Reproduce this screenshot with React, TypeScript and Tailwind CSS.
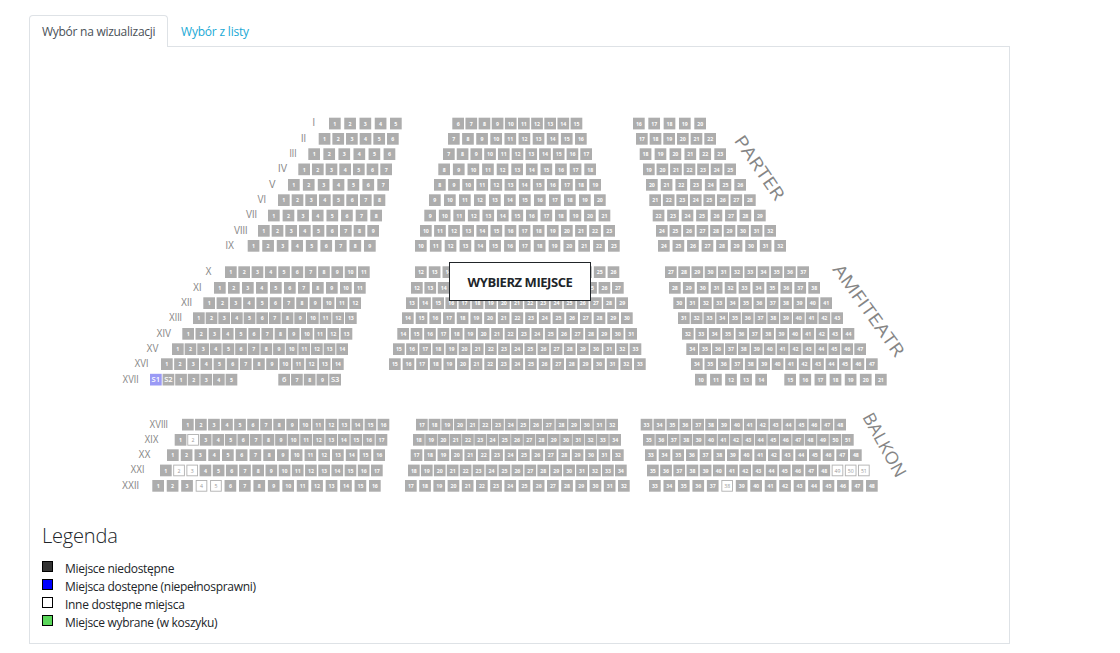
type Block = {
  from: number;
  to: number;
  seats: string[];
  free?: string[];
};

type Row = {
  label: string;
  labelX: number;
  labelWidth: number;
  y: number;
  blocks: Block[];
};

const SEAT = 11.7;

// Left edge of the first seat, right edge of the last one, first and last number.
function block(from: number, to: number, first: number, last: number, free: number[] = []): Block {
  const seats = Array.from({ length: last - first + 1 }, (_, i) => String(first + i));
  return { from, to, seats, free: free.map(String) };
}

function row(label: string, labelX: number, labelWidth: number, y: number, blocks: Block[]): Row {
  return { label, labelX, labelWidth, y, blocks };
}

const rows: Row[] = [
  row("I", 312.5, 2.5, 117.7, [block(329, 401.7, 1, 5), block(452.3, 582.3, 6, 15), block(633, 706, 16, 20)]),
  row("II", 301, 5, 133, [block(318.7, 398.7, 1, 6), block(448, 586.7, 7, 16), block(636, 716, 17, 22)]),
  row("III", 289.5, 7, 148.3, [block(308.3, 395.3, 1, 6), block(443, 592, 7, 17), block(639.7, 726, 18, 23)]),
  row("IV", 278, 9, 163.5, [block(298.3, 392, 1, 7), block(438.3, 596, 8, 18), block(643, 736, 19, 25)]),
  row("V", 269, 6.5, 179, [block(288, 389, 1, 7), block(434, 601, 8, 19), block(646, 746, 20, 26)]),
  row("VI", 257.5, 8.5, 194.3, [block(278, 385.3, 1, 8), block(429, 605.7, 9, 20), block(649.3, 755.7, 21, 28)]),
  row("VII", 246, 11, 209.7, [block(268, 382, 1, 8), block(424.3, 610.3, 9, 21), block(652.7, 765.7, 22, 29)]),
  row("VIII", 234, 13.5, 225, [block(258, 379, 1, 9), block(420, 615, 10, 23), block(656, 776, 24, 32)]),
  row("IX", 225.5, 8.5, 240, [block(247.7, 375.7, 1, 9), block(415, 619.7, 10, 23), block(658, 786, 24, 32)]),

  row("X", 205.5, 6, 266.3, [block(225, 369.7, 1, 11), block(415, 619.3, 12, 26), block(665, 809, 27, 37)]),
  row("XI", 193, 8.5, 282, [block(214, 365.7, 1, 11), block(411, 623.7, 12, 27), block(669, 820, 28, 38)]),
  row("XII", 181, 11, 297.3, [block(203.3, 361, 1, 12), block(406, 628, 13, 29), block(673.3, 832, 30, 41)]),
  row("XIII", 169, 13, 312.3, [block(193, 356.7, 1, 13), block(402, 632.7, 14, 30), block(678, 843, 31, 43)]),
  row("XIV", 156.5, 14.5, 328, [block(182.3, 352.3, 1, 13), block(397.3, 637, 14, 31), block(682, 854.3, 32, 44)]),
  row("XV", 146.5, 12, 343.3, [block(172, 348, 1, 14), block(393, 641.3, 15, 33), block(686.3, 866, 34, 47)]),
  row("XVI", 134.5, 14, 358.3, [block(161, 343.7, 1, 14), block(389, 645.7, 15, 33), block(691, 877.7, 34, 47)]),
  row("XVII", 122.5, 16, 373.8, [
    { from: 150, to: 237.3, seats: ["S1", "S2", "1", "2", "3", "4", "5"] },
    { from: 278.3, to: 341, seats: ["6", "7", "8", "9", "S3"] },
    block(695, 767, 10, 14),
    block(784.3, 886.7, 15, 21),
  ]),

  row("XVIII", 149.5, 18.5, 418.8, [block(182, 389.3, 1, 16), block(416, 618, 17, 32), block(640.7, 846, 33, 48)]),
  row("XIX", 144.5, 14, 434, [block(174.7, 387.3, 1, 17, [2]), block(413, 621, 18, 34), block(643, 853.7, 35, 51)]),
  row("XX", 138.5, 12, 449.3, [block(167, 385, 1, 16), block(410.7, 623.7, 17, 32), block(645, 861.7, 33, 48)]),
  row("XXI", 130.5, 14, 464.6, [
    block(160, 382.7, 1, 17, [2, 3]),
    block(408, 626.7, 18, 34),
    block(647, 869.7, 35, 51, [49, 50, 51]),
  ]),
  row("XXII", 122, 17, 480, [
    block(152.3, 380.7, 1, 16, [4, 5]),
    block(405, 629.7, 17, 32),
    block(649, 877.7, 33, 48, [38]),
  ]),
];

const sections = [
  { name: "PARTER", x: 733.5, y: 140.5, angle: 55.6, length: 74.5 },
  { name: "AMFITEATR", x: 832, y: 269.5, angle: 54.4, length: 109 },
  { name: "BALKON", x: 862, y: 417, angle: 61, length: 70.5 },
];

const legend = [
  { label: "Miejsce niedostępne", color: "bg-[#333333]" },
  { label: "Miejsca dostępne (niepełnosprawni)", color: "bg-[#0000ff]" },
  { label: "Inne dostępne miejsca", color: "bg-white" },
  { label: "Miejsce wybrane (w koszyku)", color: "bg-[#5bd75b]" },
];

function Seat({ x, y, name, free, large }: { x: number; y: number; name: string; free: boolean; large: boolean }) {
  return (
    <g>
      {free ? (
        <rect x={x + 0.5} y={y + 0.5} width={SEAT - 1} height={SEAT - 1} fill="#fff" stroke="#b0b0b0" strokeWidth={0.9} />
      ) : (
        <rect x={x} y={y} width={SEAT} height={SEAT} fill={name === "S1" ? "#9a9af5" : "#adadad"} />
      )}
      <text
        x={x + SEAT / 2}
        y={y + (large ? 8.6 : 8.1)}
        textAnchor="middle"
        fontSize={large ? 7.6 : 5.2}
        fontWeight={free ? 400 : large ? 600 : 700}
        fill={free ? "#9a9a9a" : "#fff"}
      >
        {name}
      </text>
    </g>
  );
}

function SeatMap() {
  return (
    <svg className="block h-[463px] w-[979px] font-['Open_Sans','Noto_Sans',sans-serif]" viewBox="30 47 979 463">
      {rows.map((r) => (
        <g key={r.label}>
          <text
            x={r.labelX}
            y={r.y + 8.7}
            fontSize={10.4}
            fontFamily="Liberation Sans, sans-serif"
            fill="#858585"
            textLength={r.labelWidth}
            lengthAdjust="spacingAndGlyphs"
          >
            {r.label}
          </text>
          {r.blocks.map((b) => {
            const step = (b.to - b.from - SEAT) / (b.seats.length - 1);
            return b.seats.map((name, i) => (
              <Seat
                key={`${b.from}-${name}`}
                x={b.from + i * step}
                y={r.y}
                name={name}
                free={b.free?.includes(name) ?? false}
                large={name.startsWith("S") || (r.label === "XVII" && name === "6")}
              />
            ));
          })}
        </g>
      ))}
      {sections.map((s) => (
        <text
          key={s.name}
          transform={`translate(${s.x} ${s.y}) rotate(${s.angle})`}
          fontSize={17.5}
          fill="#858585"
          textLength={s.length}
          lengthAdjust="spacingAndGlyphs"
        >
          {s.name}
        </text>
      ))}
    </svg>
  );
}

export default function App() {
  return (
    <div className="h-[653px] w-[1120px] overflow-hidden bg-white pl-[29px] pt-[15px] font-['Open_Sans','Noto_Sans',sans-serif] text-xs text-[#212529]">
      <nav className="flex h-8 w-[981px]">
        <a
          href="#"
          className="z-10 flex h-8 w-[139px] items-center whitespace-nowrap rounded-t border border-b-0 border-[#dee2e6] bg-white pl-3 pt-px tracking-[-0.27px] text-[#495057]"
        >
          Wybór na wizualizacji
        </a>
        <a href="#" className="flex h-8 items-center whitespace-nowrap pl-[13px] pt-[2px] tracking-[-0.2px] text-[#19a9d5]">
          Wybór z listy
        </a>
      </nav>
      <main className="relative -mt-px h-[598px] w-[981px] border border-[#dee2e6]">
        <SeatMap />
        <button className="absolute left-[419px] top-[215px] flex h-[39px] w-[142px] items-center justify-center whitespace-nowrap border border-[#212529] bg-white pt-[2px] text-[13px] font-bold tracking-[-0.44px]">
          WYBIERZ MIEJSCE
        </button>
        <section className="pl-3 pt-[13px]">
          <h2 className="pt-px text-xl font-light leading-6 tracking-[-0.2px]">Legenda</h2>
          <ul className="mt-[11px]">
            {legend.map((item) => (
              <li key={item.label} className="flex h-[18px] items-start">
                <span className={`mt-[2px] size-[11px] border border-black ${item.color}`} />
                <span className="ml-[12px] mt-px whitespace-nowrap leading-[18px] tracking-[-0.3px]">
                  {item.label}
                </span>
              </li>
            ))}
          </ul>
        </section>
      </main>
    </div>
  );
}
